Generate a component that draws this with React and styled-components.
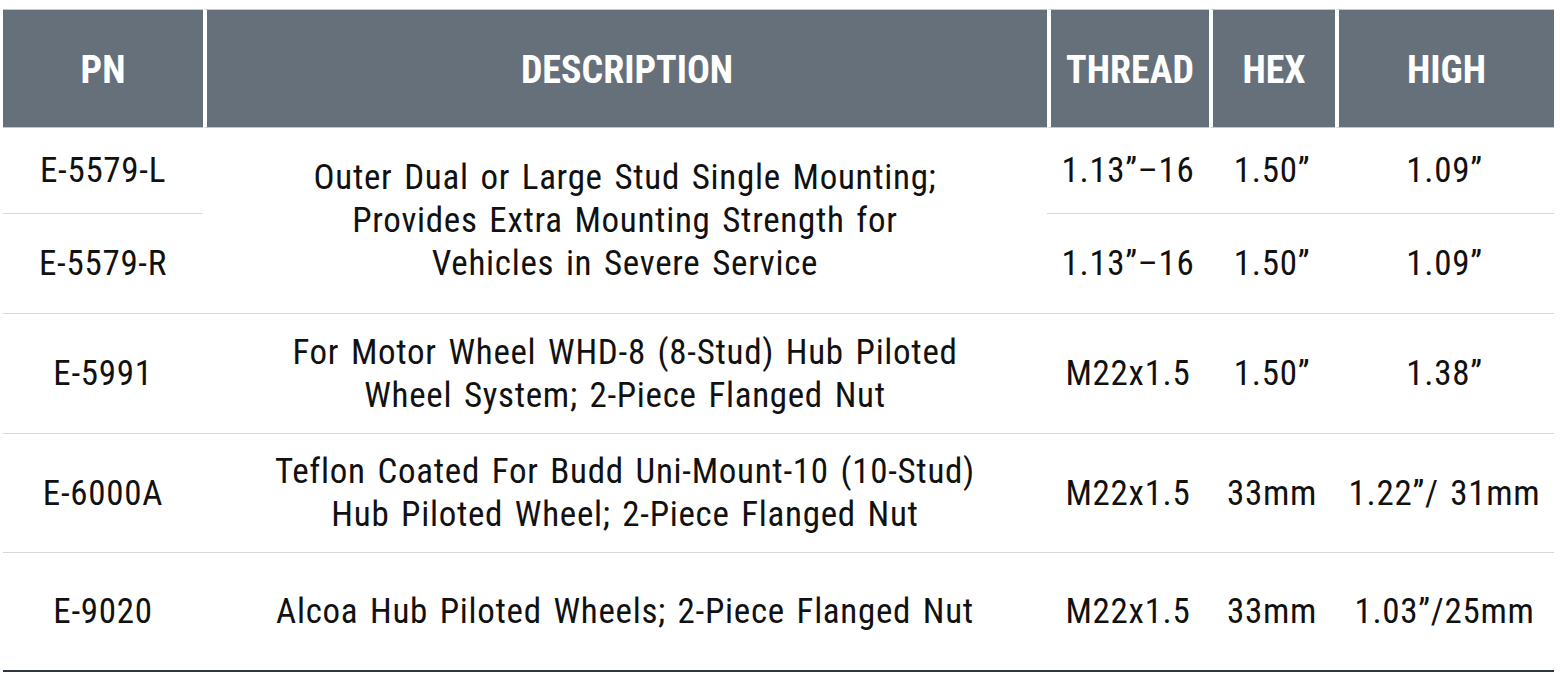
import React from "react";
import styled, { createGlobalStyle } from "styled-components";

const GlobalStyle = createGlobalStyle`
  html, body { margin: 0; padding: 0; background: #ffffff; }
  body { font-family: "Roboto Condensed", "Liberation Sans", Arial, sans-serif; }
`;

const Page = styled.div`
  width: 1560px;
  height: 684px;
  padding: 9px 0 0 3px;
  box-sizing: border-box;
  background: #fff;
`;

const Table = styled.div`
  display: grid;
  grid-template-columns: 200px 844px 162px 126px 219px;
  grid-template-rows: 119px 86px 100px 120px 119px 117px;
  width: 1551px;
  border-bottom: 2px solid #2e3641;
`;

const HeadCell = styled.div`
  display: flex;
  align-items: center;
  justify-content: center;
  background: #66707b;
  background-clip: padding-box;
  border-top: 1px solid #c3c7cc;
  border-bottom: 1px solid #c3c7cc;
  border-left: ${(p) => (p.$first ? "0" : "4px solid #fff")};
  color: #fff;
  font-family: "Roboto Condensed", "Liberation Sans", Arial, sans-serif;
  font-weight: 700;
  font-size: 38px;
  padding-top: 2px;
`;

const Cell = styled.div`
  display: flex;
  align-items: center;
  justify-content: center;
  text-align: center;
  color: #111;
  font-family: "Roboto Condensed", "Liberation Sans", Arial, sans-serif;
  font-size: 35px;
  letter-spacing: 0.7px;
  word-spacing: 3px;
  line-height: 43px;
  grid-row: ${(p) => p.$row} / span ${(p) => p.$span || 1};
  grid-column: ${(p) => p.$col};
  border-bottom: ${(p) => (p.$line ? "1px solid #d7d7dc" : "0")};
`;

const DescLine = styled.div`
  white-space: nowrap;
`;

const headers = ["PN", "DESCRIPTION", "THREAD", "HEX", "HIGH"];

const rows = [
  {
    pn: "E-5579-L",
    desc: ["Outer Dual or Large Stud Single Mounting;", "Provides Extra Mounting Strength for", "Vehicles in Severe Service"],
    span: 2,
    thread: "1.13\u201d\u201316",
    hex: "1.50\u201d",
    high: "1.09\u201d",
  },
  {
    pn: "E-5579-R",
    desc: null,
    thread: "1.13\u201d\u201316",
    hex: "1.50\u201d",
    high: "1.09\u201d",
  },
  {
    pn: "E-5991",
    desc: ["For Motor Wheel WHD-8 (8-Stud) Hub Piloted", "Wheel System; 2-Piece Flanged Nut"],
    thread: "M22x1.5",
    hex: "1.50\u201d",
    high: "1.38\u201d",
  },
  {
    pn: "E-6000A",
    desc: ["Teflon Coated For Budd Uni-Mount-10 (10-Stud)", "Hub Piloted Wheel; 2-Piece Flanged Nut"],
    thread: "M22x1.5",
    hex: "33mm",
    high: "1.22\u201d/ 31mm",
  },
  {
    pn: "E-9020",
    desc: ["Alcoa Hub Piloted Wheels; 2-Piece Flanged Nut"],
    thread: "M22x1.5",
    hex: "33mm",
    high: "1.03\u201d/25mm",
  },
];

export default function App() {
  const last = rows.length - 1;
  return (
    <>
      <GlobalStyle />
      <Page>
        <Table>
          {headers.map((h, i) => (
            <HeadCell key={h} $first={i === 0}>
              {h}
            </HeadCell>
          ))}
          {rows.map((r, i) => {
            const row = i + 2;
            const line = i !== last;
            return (
              <React.Fragment key={r.pn}>
                <Cell $row={row} $col={1} $line={line}>
                  {r.pn}
                </Cell>
                {r.desc && (
                  <Cell $row={row} $col={2} $span={r.span} $line={line}>
                    <div>
                      {r.desc.map((d) => (
                        <DescLine key={d}>{d}</DescLine>
                      ))}
                    </div>
                  </Cell>
                )}
                <Cell $row={row} $col={3} $line={line}>
                  {r.thread}
                </Cell>
                <Cell $row={row} $col={4} $line={line}>
                  {r.hex}
                </Cell>
                <Cell $row={row} $col={5} $line={line}>
                  {r.high}
                </Cell>
              </React.Fragment>
            );
          })}
        </Table>
      </Page>
    </>
  );
}
